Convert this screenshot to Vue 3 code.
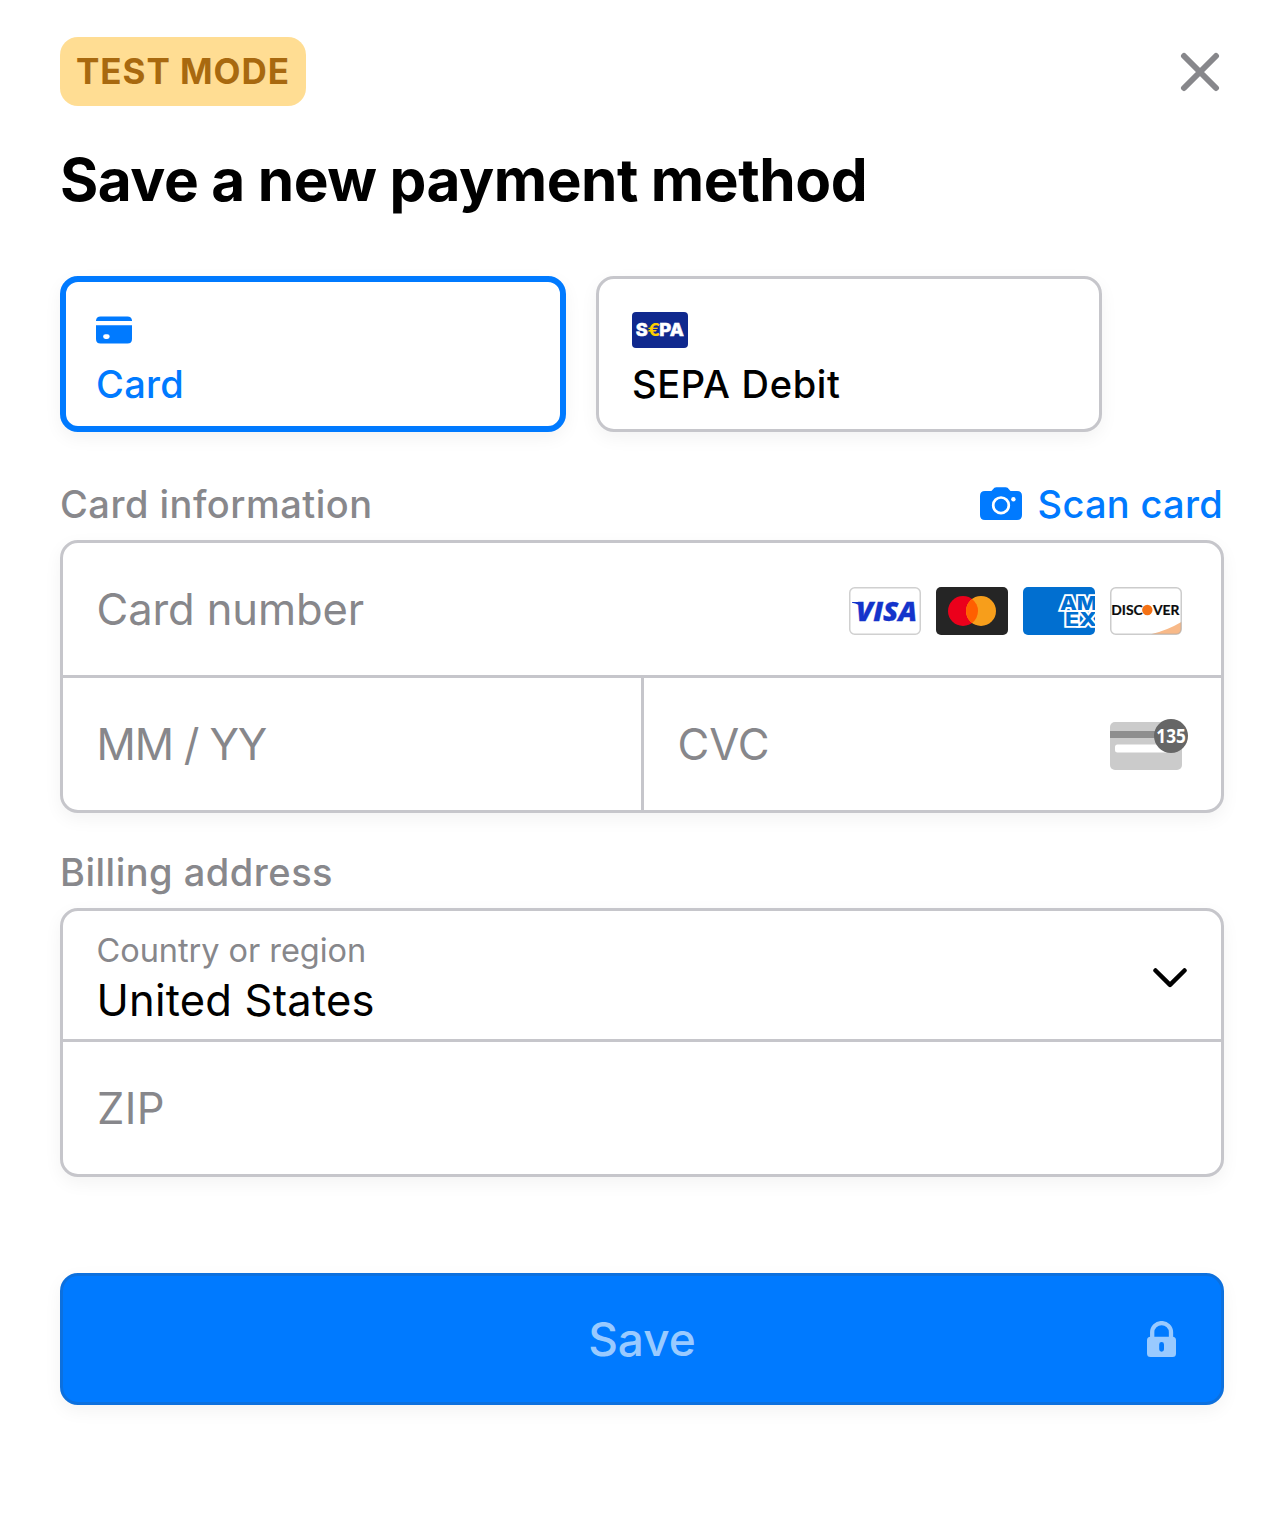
<script setup>
import { ref } from 'vue'

const method = ref('card')
</script>

<template>
  <main class="sheet">
    <header class="top">
      <span class="badge">TEST MODE</span>
      <button class="close" aria-label="Close">
        <svg width="40" height="40" viewBox="0 0 40 40">
          <path d="M4 4 36 36M36 4 4 36" stroke="#87878b" stroke-width="6" stroke-linecap="round" />
        </svg>
      </button>
    </header>

    <h1 class="title">Save a new payment method</h1>

    <div class="tabs">
      <button class="tab" :class="{ selected: method === 'card' }" @click="method = 'card'">
        <span class="tab-icon">
          <svg width="36" height="28" viewBox="0 0 36 28">
            <path d="M0 5V4.500Q.4.600 4.500.600H31.500Q35.600.600 36 4.500V5Z" fill="currentColor" />
            <path fill-rule="evenodd" d="M0 9.300H36V23Q36 27.600 31.500 27.600H4.500Q0 27.600 0 23ZM9.500 18.200a2.400 2.400 0 0 0 0 4.800h1.800a2.400 2.400 0 0 0 0-4.800Z" fill="currentColor" />
          </svg>
        </span>
        <span class="tab-label">Card</span>
      </button>
      <button class="tab" :class="{ selected: method === 'sepa' }" @click="method = 'sepa'">
        <span class="tab-icon">
          <svg width="56" height="36" viewBox="0 0 56 36">
            <rect width="56" height="36" rx="4" fill="#10298e" />
            <g font-family="Inter, sans-serif" font-weight="800" font-size="17.500" fill="#fff" stroke="#fff" stroke-width=".5">
              <text x="3.800" y="24.300" textLength="12" lengthAdjust="spacingAndGlyphs">S</text>
              <text x="27.300" y="24.300" textLength="24.500" lengthAdjust="spacingAndGlyphs">PA</text>
            </g>
            <text x="15.500" y="24.300" font-family="Inter, sans-serif" font-weight="700" font-size="17.500" fill="#ffcc00" textLength="13" lengthAdjust="spacingAndGlyphs">€</text>
          </svg>
        </span>
        <span class="tab-label sepa">SEPA Debit</span>
      </button>
    </div>

    <div class="section-head">
      <span>Card information</span>
      <button class="scan">
        <svg width="42" height="34" viewBox="0 0 42 34">
          <path d="M5 4H10.500C13 4 13 .2 16.500.2H25.500C29 .2 29 4 31.500 4H37Q42 4 42 9V28Q42 33 37 33H5Q0 33 0 28V9Q0 4 5 4Z" fill="#007aff" />
          <circle cx="21" cy="18.300" r="7.800" fill="none" stroke="#fff" stroke-width="2.700" />
          <circle cx="33.400" cy="12.300" r="2.200" fill="#fff" />
        </svg>
        <span>Scan card</span>
      </button>
    </div>

    <section class="fields">
      <div class="row">
        <span class="placeholder number">Card number</span>
        <span class="brands">
          <svg width="72" height="48" viewBox="0 0 72 48">
            <rect x=".75" y=".75" width="70.500" height="46.500" rx="5" fill="#fff" stroke="#d0d0d0" stroke-width="1.500" />
            <path d="M3 15H12.500L14 21Q10 17 3 15.700Z" fill="#1434cb" />
            <text x="7" y="34" font-family="'Open Sans', sans-serif" font-weight="800" font-style="italic" font-size="26.500" fill="#1434cb" stroke="#1434cb" stroke-width=".3" textLength="61" lengthAdjust="spacingAndGlyphs">VISA</text>
          </svg>
          <svg width="72" height="48" viewBox="0 0 72 48">
            <rect width="72" height="48" rx="5" fill="#252525" />
            <circle cx="27" cy="24" r="15" fill="#eb001b" />
            <circle cx="45" cy="24" r="15" fill="#f79e1b" />
            <path d="M36 12a15 15 0 0 1 0 24a15 15 0 0 1 0-24Z" fill="#ff5f00" />
          </svg>
          <svg width="72" height="48" viewBox="0 0 72 48">
            <rect width="72" height="48" rx="5" fill="#016fd0" />
            <text font-family="Inter, sans-serif" font-weight="800" fill="#016fd0" stroke="#fff" stroke-width="3.400" paint-order="stroke" font-size="18.500">
              <tspan x="37" y="22.800" textLength="37.500" lengthAdjust="spacingAndGlyphs">AM</tspan>
              <tspan x="42" y="38.800" textLength="32" lengthAdjust="spacingAndGlyphs">EX</tspan>
            </text>
          </svg>
          <svg width="72" height="48" viewBox="0 0 72 48">
            <rect x=".75" y=".75" width="70.500" height="46.500" rx="5" fill="#fff" />
            <path d="M41 47.300Q58 43 71.300 35V42Q71.300 47.300 66 47.300Z" fill="#f8b988" />
            <rect x=".75" y=".75" width="70.500" height="46.500" rx="5" fill="none" stroke="#aaa" stroke-opacity=".6" stroke-width="1.500" />
            <g font-family="Lato, sans-serif" font-weight="700" font-size="13" fill="#0b0b0b" stroke="#0b0b0b" stroke-width=".2">
              <text x="1.300" y="27.800" textLength="31.500" lengthAdjust="spacingAndGlyphs">DISC</text>
              <text x="43" y="27.800" textLength="26.500" lengthAdjust="spacingAndGlyphs">VER</text>
            </g>
            <circle cx="37.300" cy="23" r="5.200" fill="#f47216" />
          </svg>
        </span>
      </div>
      <div class="split">
        <div class="row expiry"><span class="placeholder date">MM / YY</span></div>
        <div class="row cvc">
          <span class="placeholder">CVC</span>
          <svg class="cvc-icon" width="78" height="52" viewBox="0 0 78 52">
            <rect y="4" width="72" height="48" rx="5" fill="#cbcbcb" />
            <path d="M0 13H60V20H0Z" fill="#8e8e8e" />
            <rect x="5" y="26.500" width="60" height="8" rx="2.500" fill="#fff" />
            <path d="M56 34.500H70V24H56Z" fill="#cbcbcb" />
            <circle cx="61" cy="18" r="17" fill="#666" />
            <text x="46.300" y="25" font-family="'Noto Sans', sans-serif" font-weight="700" font-size="20" fill="#fff" textLength="29.500" lengthAdjust="spacingAndGlyphs">135</text>
          </svg>
        </div>
      </div>
    </section>

    <div class="section-head billing">
      <span>Billing address</span>
    </div>

    <section class="fields">
      <div class="row country">
        <span class="stack">
          <span class="floating">Country or region</span>
          <span class="value">United States</span>
        </span>
        <svg width="34" height="20" viewBox="0 0 34 20">
          <path d="M2.500 2.500 17 16.800 31.500 2.500" fill="none" stroke="#000" stroke-width="4.500" stroke-linecap="round" stroke-linejoin="round" />
        </svg>
      </div>
      <div class="row zip"><span class="placeholder">ZIP</span></div>
    </section>

    <button class="save">
      <span>Save</span>
      <svg class="lock" width="29" height="36" viewBox="0 0 29 36">
        <path d="M5.200 17V11.300a9.400 9.200 0 0 1 18.800 0V17" fill="none" stroke="#99caff" stroke-width="4.300" />
        <path fill-rule="evenodd" d="M3.500 15.700H25.500Q29 15.700 29 19.200V32.500Q29 36 25.500 36H3.500Q0 36 0 32.500V19.200Q0 15.700 3.500 15.700ZM12.200 23.500V28.300a2.400 2.400 0 0 0 4.800 0V23.500a2.400 2.400 0 0 0-4.800 0Z" fill="#99caff" />
      </svg>
    </button>
  </main>
</template>

<style>
body {
  background: #fff;
}
</style>

<style scoped>
.sheet {
  box-sizing: border-box;
  width: 1284px;
  height: 1513px;
  padding: 37px 60px 0;
  background: #fff;
  font-family: Inter, 'Liberation Sans', sans-serif;
  color: #000;
  white-space: nowrap;
}
.sheet svg {
  display: block;
  flex: none;
}
button {
  margin: 0;
  padding: 0;
  border: 0;
  background: none;
  font: inherit;
  color: inherit;
  letter-spacing: inherit;
  cursor: pointer;
}
.top {
  display: flex;
  justify-content: space-between;
  align-items: center;
  height: 69px;
}
.badge {
  display: flex;
  align-items: center;
  box-sizing: border-box;
  width: 246px;
  height: 69px;
  padding: 0 0 1px 16px;
  border-radius: 18px;
  background: #ffdd93;
  color: #a8690f;
  font-size: 35px;
  font-weight: 700;
  letter-spacing: 0.95px;
}
.close {
  margin-right: 4px;
}
.title {
  margin: 38px 0 0;
  font-size: 58.5px;
  line-height: 72px;
  font-weight: 700;
  letter-spacing: -0.45px;
  word-spacing: -0.5px;
}
.tabs {
  display: flex;
  gap: 30px;
  margin-top: 60px;
}
.tab {
  display: flex;
  flex-direction: column;
  justify-content: flex-start;
  box-sizing: border-box;
  width: 506px;
  height: 156px;
  padding: 33px 33px 0;
  border: 3px solid #c6c6cb;
  border-radius: 18px;
  background: #fff;
  box-shadow: 0 6px 18px rgba(0, 0, 0, 0.05);
  text-align: left;
}
.tab.selected {
  padding: 30px 30px 0;
  border: 6px solid #007aff;
  color: #007aff;
}
.tab-icon {
  display: flex;
  flex: none;
  align-items: center;
  height: 36px;
}
.tab-label {
  margin-top: 12px;
  font-size: 38px;
  line-height: 48px;
  font-weight: 500;
  letter-spacing: 0.3px;
}
.tab-label.sepa {
  letter-spacing: 0.7px;
}
.section-head {
  display: flex;
  justify-content: space-between;
  align-items: center;
  height: 48px;
  margin: 48px 0 12px;
  font-size: 38px;
  font-weight: 500;
  letter-spacing: 0.5px;
  color: #88888c;
}
.section-head.billing {
  margin: 35px 0 12px;
}
.scan {
  display: flex;
  align-items: center;
  gap: 16px;
  margin-right: 1px;
  color: #007aff;
  letter-spacing: 0.3px;
}
.fields {
  border: 3px solid #c6c6cb;
  border-radius: 18px;
  background: #fff;
  box-shadow: 0 6px 18px rgba(0, 0, 0, 0.05);
}
.row {
  display: flex;
  align-items: center;
  justify-content: space-between;
  box-sizing: border-box;
  height: 132px;
  padding-left: 33.5px;
  font-size: 43.5px;
}
.placeholder {
  color: #87878b;
}
.placeholder.number {
  letter-spacing: -0.1px;
}
.placeholder.date {
  letter-spacing: -1.15px;
}
.brands {
  display: flex;
  gap: 15px;
  margin: 4px 39px 0 0;
}
.split {
  display: flex;
  border-top: 3px solid #c6c6cb;
}
.expiry {
  width: 578px;
}
.cvc {
  flex: 1;
  border-left: 3px solid #c6c6cb;
}
.cvc-icon {
  margin-right: 33px;
}
.country {
  height: 128px;
  padding-right: 34px;
}
.country svg {
  margin-top: 5px;
}
.stack {
  display: flex;
  flex-direction: column;
  padding-top: 5px;
}
.floating {
  font-size: 32.5px;
  line-height: 45px;
  letter-spacing: -0.05px;
  color: #87878b;
}
.value {
  line-height: 54px;
  letter-spacing: 0.2px;
}
.zip {
  border-top: 3px solid #c6c6cb;
  height: 135px;
  padding-left: 34px;
}
.zip .placeholder {
  letter-spacing: 0.3px;
}
.save {
  position: relative;
  display: flex;
  align-items: center;
  justify-content: center;
  box-sizing: border-box;
  width: 100%;
  height: 132px;
  margin-top: 96px;
  border: 3px solid #0c70de;
  border-radius: 18px;
  background: #007aff;
  box-shadow: 0 6px 18px rgba(0, 0, 0, 0.05);
  color: #99caff;
  font-size: 46px;
  font-weight: 500;
}
.save span {
  padding-bottom: 1px;
}
.lock {
  position: absolute;
  right: 45px;
  top: 45px;
}
</style>
